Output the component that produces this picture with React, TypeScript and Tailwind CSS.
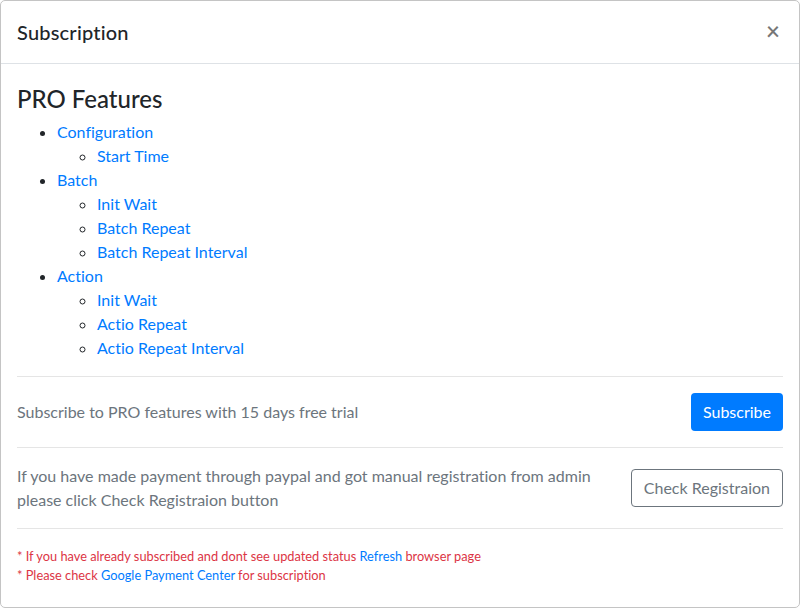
import React from "react";

const font = { fontFamily: '"Segoe UI", Lato, "Noto Sans", "Liberation Sans", sans-serif' };

export default function App() {
  return (
    <div className="w-[800px] h-[608px] bg-white text-[#212529] [font-variant-ligatures:none]" style={font}>
      <div className="h-full border border-[#c4c4c4] rounded-[5px] flex flex-col overflow-hidden">
        <div className="h-[63px] shrink-0 flex items-center justify-between px-4 border-b border-[#dee2e6]">
          <h5 className="text-[20px] font-medium leading-[1.5] tracking-[0.2px]">Subscription</h5>
          <button className="text-[24px] font-semibold leading-none text-[#777] mr-[3px] -mt-[2px]">×</button>
        </div>
        <div className="p-4 flex-1">
          <h4 className="text-[24px] font-medium leading-[1.2] mb-[6px] mt-[5px]">PRO Features</h4>
          <ul className="list-disc pl-10 text-[16px] leading-6 mb-4 text-[#007bff]">
            <li className="marker:text-[#212529]">
              Configuration
              <ul className="list-[circle] pl-10">
                <li className="marker:text-[#212529]">Start Time</li>
              </ul>
            </li>
            <li className="marker:text-[#212529]">
              Batch
              <ul className="list-[circle] pl-10">
                <li className="marker:text-[#212529]">Init Wait</li>
                <li className="marker:text-[#212529]">Batch Repeat</li>
                <li className="marker:text-[#212529]">Batch Repeat Interval</li>
              </ul>
            </li>
            <li className="marker:text-[#212529]">
              Action
              <ul className="list-[circle] pl-10">
                <li className="marker:text-[#212529]">Init Wait</li>
                <li className="marker:text-[#212529]">Actio Repeat</li>
                <li className="marker:text-[#212529]">Actio Repeat Interval</li>
              </ul>
            </li>
          </ul>
          <hr className="border-t border-black/10 my-4" />
          <div className="flex items-center justify-between text-[16px] leading-6 text-[#6c757d]">
            <span>Subscribe to PRO features with 15 days free trial</span>
            <button className="h-[38px] px-3 rounded-[4px] bg-[#007bff] text-white text-[16px] leading-6">Subscribe</button>
          </div>
          <hr className="border-t border-black/10 my-4" />
          <div className="flex items-center justify-between text-[16px] leading-6 text-[#6c757d]">
            <span>
              If you have made payment through paypal and got manual registration from admin
              <br />
              please click Check Registraion button
            </span>
            <button className="h-[38px] px-3 rounded-[4px] border border-[#6c757d] text-[#6c757d] text-[16px] leading-6 shrink-0">Check Registraion</button>
          </div>
          <hr className="border-t border-black/10 my-4" />
          <div className="text-[12.8px] leading-[19px] text-[#dc3545] pt-[2px]">
            <div>* If you have already subscribed and dont see updated status <span className="text-[#007bff]">Refresh</span> browser page</div>
            <div>* Please check <span className="text-[#007bff]">Google Payment Center</span> for subscription</div>
          </div>
        </div>
      </div>
    </div>
  );
}
